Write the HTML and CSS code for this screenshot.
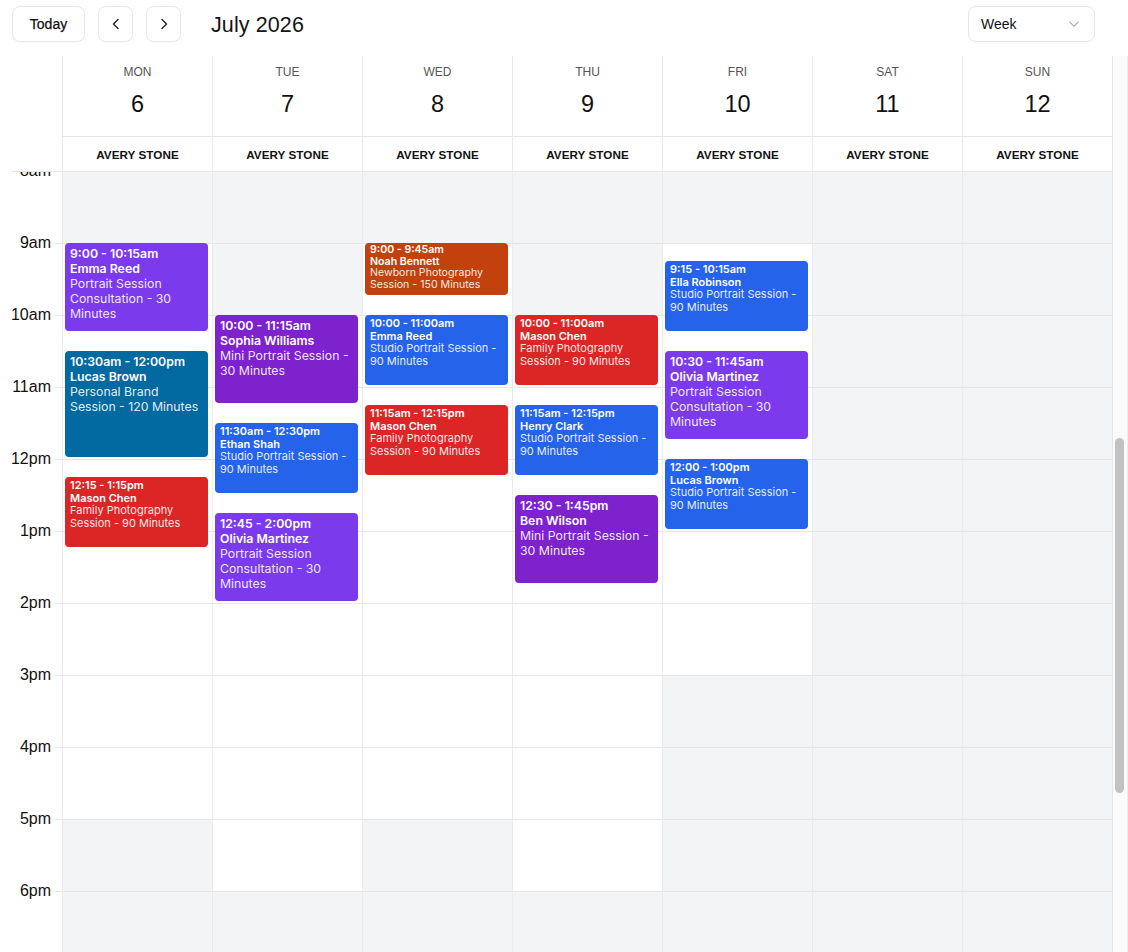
FILE: index.html
```html
<!DOCTYPE html>
<html lang="en">
<head>
<meta charset="utf-8">
<title>Schedule — July 2026</title>
<link rel="stylesheet" href="styles.css">
</head>
<body>
<div class="app">
  <header class="toolbar">
    <button class="btn btn-today" type="button">Today</button>
    <button class="btn btn-icon" type="button" aria-label="Previous week">
      <svg viewBox="0 0 16 16" width="16" height="16"><polyline points="10 3.5 5.5 8 10 12.5"/></svg>
    </button>
    <button class="btn btn-icon" type="button" aria-label="Next week">
      <svg viewBox="0 0 16 16" width="16" height="16"><polyline points="6 3.5 10.5 8 6 12.5"/></svg>
    </button>
    <h1 class="title">July 2026</h1>
    <div class="spacer"></div>
    <div class="select">
      <span>Week</span>
      <svg viewBox="0 0 12 12" width="12" height="12"><polyline points="1.8 4.2 6 8.2 10.2 4.2"/></svg>
    </div>
  </header>

  <div class="calendar">
    <div class="cal-main">
      <div class="day-head">
        <div class="gutter-head"></div>
        <div class="day"><span class="dow">MON</span><span class="date">6</span></div>
        <div class="day"><span class="dow">TUE</span><span class="date">7</span></div>
        <div class="day"><span class="dow">WED</span><span class="date">8</span></div>
        <div class="day"><span class="dow">THU</span><span class="date">9</span></div>
        <div class="day"><span class="dow">FRI</span><span class="date">10</span></div>
        <div class="day"><span class="dow">SAT</span><span class="date">11</span></div>
        <div class="day"><span class="dow">SUN</span><span class="date">12</span></div>
      </div>

      <div class="resource-row">
        <div class="gutter-res"></div>
        <div class="resource">AVERY STONE</div>
        <div class="resource">AVERY STONE</div>
        <div class="resource">AVERY STONE</div>
        <div class="resource">AVERY STONE</div>
        <div class="resource">AVERY STONE</div>
        <div class="resource">AVERY STONE</div>
        <div class="resource">AVERY STONE</div>
      </div>

      <div class="body">
        <div class="grid">
          <div class="gutter">
            <div class="tslot"><span class="hour">8am</span></div>
            <div class="tslot"><span class="hour">9am</span></div>
            <div class="tslot"><span class="hour">10am</span></div>
            <div class="tslot"><span class="hour">11am</span></div>
            <div class="tslot"><span class="hour">12pm</span></div>
            <div class="tslot"><span class="hour">1pm</span></div>
            <div class="tslot"><span class="hour">2pm</span></div>
            <div class="tslot"><span class="hour">3pm</span></div>
            <div class="tslot"><span class="hour">4pm</span></div>
            <div class="tslot"><span class="hour">5pm</span></div>
            <div class="tslot"><span class="hour">6pm</span></div>
            <div class="tslot"><span class="hour">7pm</span></div>
          </div>

          <!-- Monday: open 9am–5pm -->
          <div class="col">
            <div class="slot off"></div>
            <div class="slot"></div><div class="slot"></div><div class="slot"></div><div class="slot"></div>
            <div class="slot"></div><div class="slot"></div><div class="slot"></div><div class="slot"></div>
            <div class="slot off"></div><div class="slot off"></div><div class="slot off"></div>

            <div class="event lg violet" style="top:71px;height:88px">
              <div class="time">9:00 - 10:15am</div>
              <div class="who">Emma Reed</div>
              <div class="what">Portrait Session Consultation - 30 Minutes</div>
            </div>
            <div class="event lg sky" style="top:179px;height:106px">
              <div class="time">10:30am - 12:00pm</div>
              <div class="who">Lucas Brown</div>
              <div class="what">Personal Brand Session - 120 Minutes</div>
            </div>
            <div class="event sm red" style="top:305px;height:70px">
              <div class="time">12:15 - 1:15pm</div>
              <div class="who">Mason Chen</div>
              <div class="what">Family Photography Session - 90 Minutes</div>
            </div>
          </div>

          <!-- Tuesday: open 10am–6pm -->
          <div class="col">
            <div class="slot off"></div><div class="slot off"></div>
            <div class="slot"></div><div class="slot"></div><div class="slot"></div><div class="slot"></div>
            <div class="slot"></div><div class="slot"></div><div class="slot"></div><div class="slot"></div>
            <div class="slot off"></div><div class="slot off"></div>

            <div class="event lg purple" style="top:143px;height:88px">
              <div class="time">10:00 - 11:15am</div>
              <div class="who">Sophia Williams</div>
              <div class="what">Mini Portrait Session - 30 Minutes</div>
            </div>
            <div class="event sm blue" style="top:251px;height:70px">
              <div class="time">11:30am - 12:30pm</div>
              <div class="who">Ethan Shah</div>
              <div class="what">Studio Portrait Session - 90 Minutes</div>
            </div>
            <div class="event lg violet" style="top:341px;height:88px">
              <div class="time">12:45 - 2:00pm</div>
              <div class="who">Olivia Martinez</div>
              <div class="what">Portrait Session Consultation - 30 Minutes</div>
            </div>
          </div>

          <!-- Wednesday: open 9am–5pm -->
          <div class="col">
            <div class="slot off"></div>
            <div class="slot"></div><div class="slot"></div><div class="slot"></div><div class="slot"></div>
            <div class="slot"></div><div class="slot"></div><div class="slot"></div><div class="slot"></div>
            <div class="slot off"></div><div class="slot off"></div><div class="slot off"></div>

            <div class="event xs orange" style="top:71px;height:52px">
              <div class="time">9:00 - 9:45am</div>
              <div class="who">Noah Bennett</div>
              <div class="what">Newborn Photography Session - 150 Minutes</div>
            </div>
            <div class="event sm blue" style="top:143px;height:70px">
              <div class="time">10:00 - 11:00am</div>
              <div class="who">Emma Reed</div>
              <div class="what">Studio Portrait Session - 90 Minutes</div>
            </div>
            <div class="event sm red" style="top:233px;height:70px">
              <div class="time">11:15am - 12:15pm</div>
              <div class="who">Mason Chen</div>
              <div class="what">Family Photography Session - 90 Minutes</div>
            </div>
          </div>

          <!-- Thursday: open 10am–6pm -->
          <div class="col">
            <div class="slot off"></div><div class="slot off"></div>
            <div class="slot"></div><div class="slot"></div><div class="slot"></div><div class="slot"></div>
            <div class="slot"></div><div class="slot"></div><div class="slot"></div><div class="slot"></div>
            <div class="slot off"></div><div class="slot off"></div>

            <div class="event sm red" style="top:143px;height:70px">
              <div class="time">10:00 - 11:00am</div>
              <div class="who">Mason Chen</div>
              <div class="what">Family Photography Session - 90 Minutes</div>
            </div>
            <div class="event sm blue" style="top:233px;height:70px">
              <div class="time">11:15am - 12:15pm</div>
              <div class="who">Henry Clark</div>
              <div class="what">Studio Portrait Session - 90 Minutes</div>
            </div>
            <div class="event lg purple" style="top:323px;height:88px">
              <div class="time">12:30 - 1:45pm</div>
              <div class="who">Ben Wilson</div>
              <div class="what">Mini Portrait Session - 30 Minutes</div>
            </div>
          </div>

          <!-- Friday: open 9am–3pm -->
          <div class="col">
            <div class="slot off"></div>
            <div class="slot"></div><div class="slot"></div><div class="slot"></div>
            <div class="slot"></div><div class="slot"></div><div class="slot"></div>
            <div class="slot off"></div><div class="slot off"></div><div class="slot off"></div>
            <div class="slot off"></div><div class="slot off"></div>

            <div class="event sm blue" style="top:89px;height:70px">
              <div class="time">9:15 - 10:15am</div>
              <div class="who">Ella Robinson</div>
              <div class="what">Studio Portrait Session - 90 Minutes</div>
            </div>
            <div class="event lg violet" style="top:179px;height:88px">
              <div class="time">10:30 - 11:45am</div>
              <div class="who">Olivia Martinez</div>
              <div class="what">Portrait Session Consultation - 30 Minutes</div>
            </div>
            <div class="event sm blue" style="top:287px;height:70px">
              <div class="time">12:00 - 1:00pm</div>
              <div class="who">Lucas Brown</div>
              <div class="what">Studio Portrait Session - 90 Minutes</div>
            </div>
          </div>

          <!-- Saturday: closed -->
          <div class="col">
            <div class="slot off"></div><div class="slot off"></div><div class="slot off"></div>
            <div class="slot off"></div><div class="slot off"></div><div class="slot off"></div>
            <div class="slot off"></div><div class="slot off"></div><div class="slot off"></div>
            <div class="slot off"></div><div class="slot off"></div><div class="slot off"></div>
          </div>

          <!-- Sunday: closed -->
          <div class="col">
            <div class="slot off"></div><div class="slot off"></div><div class="slot off"></div>
            <div class="slot off"></div><div class="slot off"></div><div class="slot off"></div>
            <div class="slot off"></div><div class="slot off"></div><div class="slot off"></div>
            <div class="slot off"></div><div class="slot off"></div><div class="slot off"></div>
          </div>
        </div>
      </div>
    </div>

    <div class="scrollbar"><div class="thumb"></div></div>
  </div>
</div>
</body>
</html>
```

FILE: styles.css
```css
* {
  box-sizing: border-box;
}

html,
body {
  margin: 0;
  height: 100%;
  background: #fff;
  color: #111;
  font-family: "Liberation Sans", Arial, sans-serif;
}

.app {
  height: 100vh;
  display: flex;
  flex-direction: column;
  overflow: hidden;
}

/* ---- toolbar ---- */
.toolbar {
  flex: none;
  height: 56px;
  display: flex;
  align-items: flex-start;
  gap: 13px;
  padding: 6px 33px 0 12px;
}

.btn {
  height: 36px;
  border: 1px solid #e6e7ea;
  border-radius: 8px;
  background: #fff;
  color: #111;
  font-family: "Liberation Sans", Arial, sans-serif;
  font-size: 14px;
  padding: 0;
  display: flex;
  align-items: center;
  justify-content: center;
  box-shadow: 0 1px 1px rgba(0, 0, 0, 0.02);
}

.btn-today {
  width: 73px;
  font-weight: 500;
  -webkit-text-stroke: 0.25px #111;
}

.btn-icon {
  width: 35px;
}

.btn-icon svg {
  fill: none;
  stroke: #222;
  stroke-width: 1.4;
  stroke-linecap: round;
  stroke-linejoin: round;
}

.title {
  margin: 1px 0 0 17px;
  height: 36px;
  display: flex;
  align-items: center;
  font-size: 21.5px;
  font-weight: 400;
  color: #141414;
  letter-spacing: 0.1px;
}

.spacer {
  flex: 1;
}

.select {
  width: 127px;
  height: 36px;
  border: 1px solid #e6e7ea;
  border-radius: 8px;
  display: flex;
  align-items: center;
  justify-content: space-between;
  padding: 0 14px 0 12px;
  font-size: 14px;
  color: #111;
}

.select svg {
  fill: none;
  stroke: #a3a7ad;
  stroke-width: 1.1;
  stroke-linecap: round;
  stroke-linejoin: round;
}

/* ---- calendar frame ---- */
.calendar {
  flex: 1;
  min-height: 0;
  display: flex;
}

.cal-main {
  width: 1112px;
  display: flex;
  flex-direction: column;
  min-height: 0;
}

.day-head,
.resource-row,
.grid {
  display: grid;
  grid-template-columns: 62px repeat(7, 150px);
}

.day {
  height: 81px;
  border-left: 1px solid #ebebeb;
  border-bottom: 1px solid #e5e5e5;
  display: flex;
  flex-direction: column;
  align-items: center;
  padding-top: 9px;
}

.dow {
  font-size: 12px;
  line-height: 14px;
  color: #555;
}

.date {
  margin-top: 12px;
  font-size: 23.5px;
  line-height: 26px;
  color: #111;
}

.resource-row {
  grid-template-columns: 50px repeat(7, 150px);
  margin-left: 12px;
  border-bottom: 1px solid #e5e5e5;
}

.resource {
  height: 34px;
  border-left: 1px solid #ebebeb;
  display: flex;
  align-items: center;
  justify-content: center;
  font-size: 11.7px;
  font-weight: 700;
  color: #111;
  letter-spacing: 0.05px;
}

/* ---- time grid ---- */
.body {
  flex: 1;
  min-height: 0;
  overflow: hidden;
}

.tslot {
  position: relative;
  height: 72px;
}

.tslot::after {
  content: "";
  position: absolute;
  right: 0;
  bottom: 0;
  width: 7px;
  height: 1px;
  background: #e5e5e5;
}

.hour {
  display: block;
  text-align: right;
  padding-right: 11px;
  font-size: 16px;
  line-height: 20px;
  color: #111;
  transform: translateY(-11px);
}

.col {
  position: relative;
  border-left: 1px solid #ebebeb;
}

.slot {
  height: 72px;
  border-bottom: 1px solid #e6e6e6;
}

.slot.off {
  background: #f3f4f5;
}

/* ---- appointments ---- */
.event {
  position: absolute;
  left: 2px;
  right: 4px;
  border-radius: 4px;
  padding: 2px 5px;
  overflow: hidden;
  color: #fff;
  font-family: Inter, "Liberation Sans", sans-serif;
}

.event .time,
.event .who {
  font-weight: 600;
}

.event .what {
  color: rgba(255, 255, 255, 0.9);
}

.event.lg {
  font-size: 12.3px;
  line-height: 15px;
  padding-top: 2.5px;
}

.event.sm {
  font-size: 11px;
  line-height: 12.6px;
  padding-top: 2px;
}

.event.xs {
  font-size: 10.6px;
  line-height: 11.5px;
  padding-top: 1px;
}

.violet { background: #7c3aed; }
.purple { background: #7e22ce; }
.sky    { background: #0369a1; }
.red    { background: #dc2626; }
.blue   { background: #2563eb; }
.orange { background: #c2410c; }

/* ---- scroll track ---- */
.scrollbar {
  width: 16px;
  background: #fafafa;
  border-left: 1px solid #e6e6e6;
  border-right: 1px solid #ececec;
  padding: 0 2px;
}

.thumb {
  margin-top: 382px;
  height: 355px;
  width: 9px;
  border-radius: 5px;
  background: #c2c2c2;
}
```
